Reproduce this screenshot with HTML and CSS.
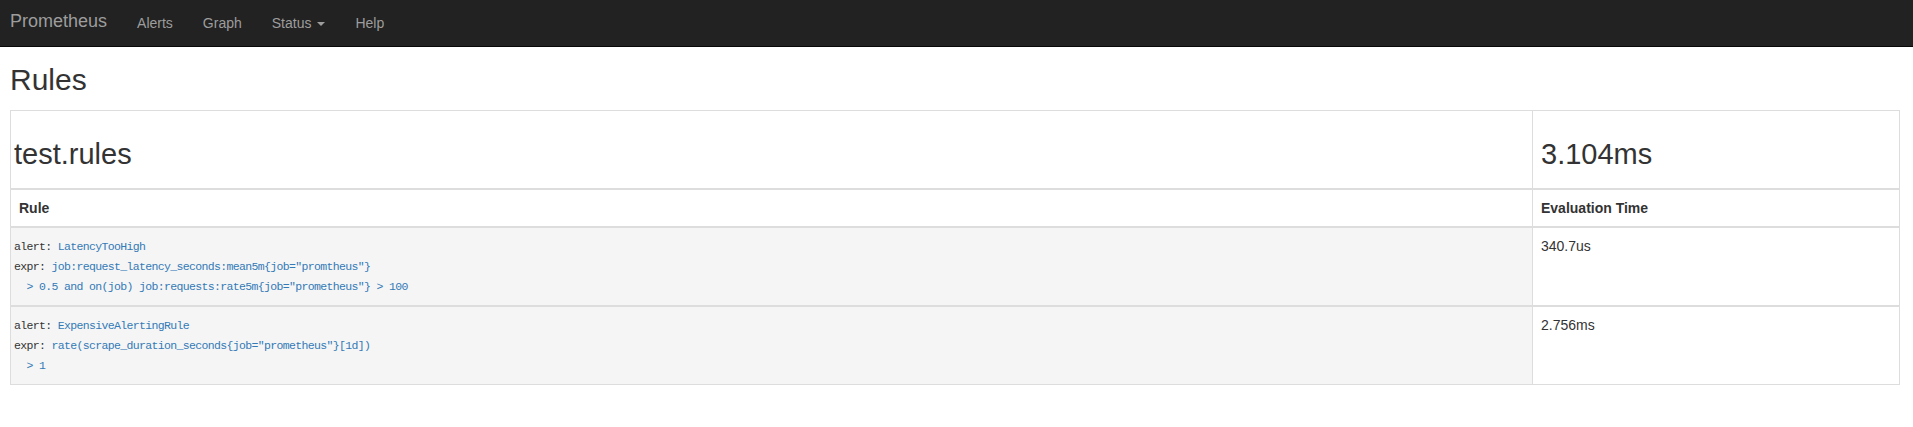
FILE: index.html
```html
<!DOCTYPE html>
<html lang="en">
<head>
    <meta charset="UTF-8">
    <title>Prometheus Time Series Collection and Processing Server</title>
    <link rel="stylesheet" href="styles.css">
</head>
<body>
    <nav class="navbar">
        <a class="brand" href="#">Prometheus</a>
        <a class="nav-link" href="#">Alerts</a>
        <a class="nav-link" href="#">Graph</a>
        <a class="nav-link" href="#">Status <span class="caret"></span></a>
        <a class="nav-link" href="#">Help</a>
    </nav>
    <div class="container">
        <h1>Rules</h1>
        <div class="rules-table">
            <div class="cell group-name">test.rules</div>
            <div class="cell group-time">3.104ms</div>

            <div class="cell head">Rule</div>
            <div class="cell head side">Evaluation Time</div>

            <div class="cell rule">
                <div class="line">alert: <a href="#">LatencyTooHigh</a></div>
                <div class="line">expr: <a href="#">job:request_latency_seconds:mean5m{job="promtheus"}</a></div>
                <div class="line">  <a href="#">&gt; 0.5 and on(job) job:requests:rate5m{job="prometheus"} &gt; 100</a></div>
            </div>
            <div class="cell side">340.7us</div>

            <div class="cell rule last">
                <div class="line">alert: <a href="#">ExpensiveAlertingRule</a></div>
                <div class="line">expr: <a href="#">rate(scrape_duration_seconds{job="prometheus"}[1d])</a></div>
                <div class="line">  <a href="#">&gt; 1</a></div>
            </div>
            <div class="cell side last">2.756ms</div>
        </div>
    </div>
</body>
</html>
```

FILE: styles.css
```css
body {
    margin: 0;
    font-family: "Liberation Sans", Arial, sans-serif;
    font-size: 14px;
    line-height: 20px;
    color: #333;
    background: #fff;
}
a {
    color: #337ab7;
    text-decoration: none;
}
.navbar {
    display: flex;
    align-items: center;
    height: 46px;
    background: #222;
    border-bottom: 1px solid #080808;
}
.brand {
    color: #9d9d9d;
    font-size: 18px;
    line-height: 20px;
    padding: 0 15px 4px 10px;
}
.nav-link {
    color: #9d9d9d;
    padding: 0 15px;
    line-height: 20px;
}
.caret {
    display: inline-block;
    width: 0;
    height: 0;
    margin-left: 2px;
    vertical-align: middle;
    border-top: 4px solid #9d9d9d;
    border-left: 4px solid transparent;
    border-right: 4px solid transparent;
}
.container {
    padding: 0 13px 0 10px;
}
h1 {
    font-size: 30px;
    font-weight: 500;
    line-height: 33px;
    margin: 16px 0 14px;
}
.rules-table {
    display: grid;
    grid-template-columns: 1fr 367px;
    border: 1px solid #ddd;
}
.cell {
    padding: 8px;
    border-bottom: 2px solid #ddd;
}
.cell.side,
.group-time {
    border-left: 1px solid #ddd;
}
.cell.last {
    border-bottom: none;
}
.group-name,
.group-time {
    font-size: 29px;
    line-height: 32px;
    padding-top: 27px;
    padding-bottom: 18px;
}
.group-name {
    padding-left: 3px;
}
.head {
    font-weight: bold;
}
.rule {
    background: #f5f5f5;
    padding: 9px 3px 8px;
    font-family: "Liberation Mono", "DejaVu Sans Mono", monospace;
    font-size: 11.5px;
    letter-spacing: -0.65px;
    line-height: 20px;
}
.rule .line {
    white-space: pre;
    height: 20px;
}
```
